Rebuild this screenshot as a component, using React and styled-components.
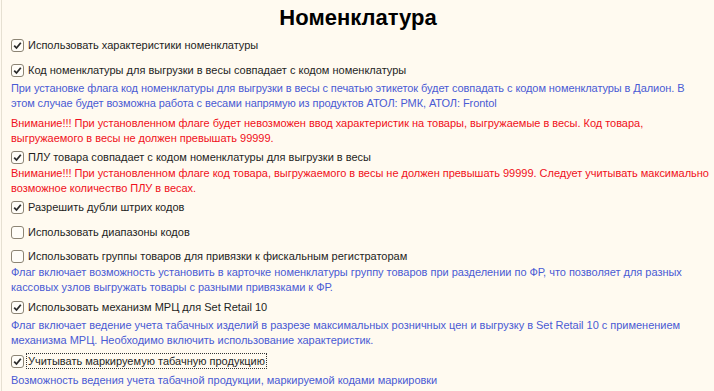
import React from "react";
import styled, { createGlobalStyle } from "styled-components";

const Global = createGlobalStyle`
  html, body { margin: 0; padding: 0; background: #fffaf0; overflow: hidden; }
  body { font-family: "Liberation Sans", Arial, sans-serif; }
`;

const Page = styled.div`
  width: 713px;
  height: 391px;
  margin-left: 1px;
  border-left: 1px solid #e6e0d2;
  background: #fffaf0;
  padding: 6px 0 0 9px;
  box-sizing: border-box;
  display: flex;
  flex-direction: column;
  overflow: hidden;
`;

const Title = styled.h1`
  margin: 0;
  font-size: 22px;
  line-height: 24px;
  font-weight: bold;
  text-align: center;
  color: #000;
  padding-right: 9px;
`;

const Row = styled.label`
  display: flex;
  align-items: center;
  gap: 3px;
  height: 17px;
  margin-top: ${(p) => p.$mt || 0}px;
  font-size: 11px;
  color: #1e1e1e;
`;

const Box = styled.span`
  width: 13px;
  height: 13px;
  box-sizing: border-box;
  border: 1px solid #8c8474;
  border-radius: 3px;
  background: #fffdf8;
  display: flex;
  align-items: center;
  justify-content: center;
  flex: none;
`;

const LabelText = styled.span`
  padding: 1px 1px;
  outline: ${(p) => (p.$focus ? "1px dotted #333" : "none")};
`;

const Note = styled.div`
  margin-top: ${(p) => p.$mt || 0}px;
  font-size: 11px;
  line-height: 15px;
  color: ${(p) => (p.$warn ? "#f01020" : "#4a5bd4")};
  letter-spacing: ${(p) => (p.$tight ? "-0.08px" : "-0.02px")};
  padding-right: ${(p) => (p.$tight ? "12px" : "0")};
`;

const Check = ({ checked }) => (
  <Box>
    {checked && (
      <svg width="9" height="9" viewBox="0 0 9 9">
        <path d="M1.2 4.6 L3.5 7 L7.8 1.8" fill="none" stroke="#2a2a2a" strokeWidth="1.8" />
      </svg>
    )}
  </Box>
);

const Option = ({ checked, mt, focus, children }) => (
  <Row $mt={mt}>
    <Check checked={checked} />
    <LabelText $focus={focus}>{children}</LabelText>
  </Row>
);

export default function App() {
  return (
    <>
      <Global />
      <Page>
        <Title>Номенклатура</Title>
        <Option checked mt={6.5}>Использовать характеристики номенклатуры</Option>
        <Option checked mt={8}>Код номенклатуры для выгрузки в весы совпадает с кодом номенклатуры</Option>
        <Note $mt={2} $tight>
          При установке флага код номенклатуры для выгрузки в весы с печатью этикеток будет совпадать с кодом номенклатуры в Далион. В этом случае будет возможна работа с весами напрямую из продуктов АТОЛ: РМК, АТОЛ: Frontol
        </Note>
        <Note $warn $mt={5}>
          Внимание!!! При установленном флаге будет невозможен ввод характеристик на товары, выгружаемые в весы. Код товара, выгружаемого в весы не должен превышать 99999.
        </Note>
        <Option checked mt={3}>ПЛУ товара совпадает с кодом номенклатуры для выгрузки в весы</Option>
        <Note $warn $mt={0}>
          Внимание!!! При установленном флаге код товара, выгружаемого в весы не должен превышать 99999. Следует учитывать максимально возможное количество ПЛУ в весах.
        </Note>
        <Option checked mt={3}>Разрешить дубли штрих кодов</Option>
        <Option mt={8}>Использовать диапазоны кодов</Option>
        <Option mt={7}>Использовать группы товаров для привязки к фискальным регистраторам</Option>
        <Note $mt={0}>
          Флаг включает возможность установить в карточке номенклатуры группу товаров при разделении по ФР, что позволяет для разных кассовых узлов выгружать товары с разными привязками к ФР.
        </Note>
        <Option checked mt={4}>Использовать механизм МРЦ для Set Retail 10</Option>
        <Note $mt={2}>
          Флаг включает ведение учета табачных изделий в разрезе максимальных розничных цен и выгрузку в Set Retail 10 с применением механизма МРЦ. Необходимо включить использование характеристик.
        </Note>
        <Option checked mt={5} focus>Учитывать маркируемую табачную продукцию</Option>
        <Note $mt={3}>Возможность ведения учета табачной продукции, маркируемой кодами маркировки</Note>
      </Page>
    </>
  );
}
